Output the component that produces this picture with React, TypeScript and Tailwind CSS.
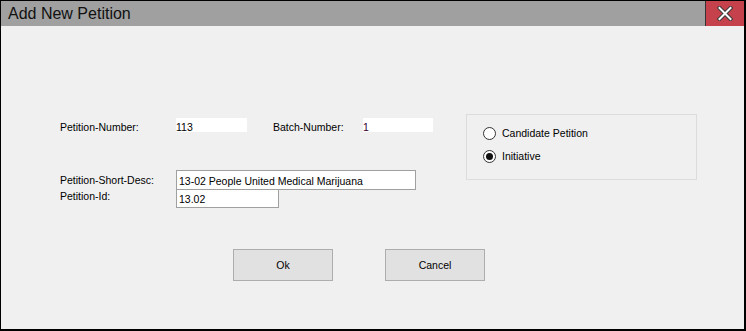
import { useState } from "react";

function CloseGlyph() {
	return (
		<svg width="16" height="15" viewBox="0 0 16 15">
			<path d="M2.5 2 L13.5 13 M13.5 2 L2.5 13" stroke="#3a3a3a" strokeWidth="4" strokeLinecap="square" />
			<path d="M2.5 2 L13.5 13 M13.5 2 L2.5 13" stroke="#ffffff" strokeWidth="2" strokeLinecap="square" />
		</svg>
	);
}

function Radio({
	label,
	checked,
	onSelect,
}: {
	label: string;
	checked: boolean;
	onSelect: () => void;
}) {
	return (
		<button
			type="button"
			className="flex items-center h-[13px] text-left"
			onClick={onSelect}
		>
			<span className="flex items-center justify-center w-[13px] h-[13px] rounded-full border border-[#333333] bg-white">
				{checked && <span className="w-[7px] h-[7px] rounded-full bg-[#111111]" />}
			</span>
			<span className="ml-[6px] leading-[13px]">{label}</span>
		</button>
	);
}

export default function App() {
	const [kind, setKind] = useState<"candidate" | "initiative">("initiative");

	return (
		<div
			className="w-[746px] h-[331px] flex flex-col border border-black border-r-2 border-b-2 bg-[#f0f0f0] text-[10.5px] text-black"
			style={{ fontFamily: '"Liberation Sans", Arial, sans-serif' }}
		>
			<div className="flex h-[25px] bg-[#a0a0a0] shrink-0">
				<div className="flex-1 pl-[7px] text-[16px] leading-[25px] text-[#111111]">
					Add New Petition
				</div>
				<button
					type="button"
					className="w-[39px] h-[25px] flex items-center justify-center bg-[#c5414b] border-l border-[#333333]"
				>
					<CloseGlyph />
				</button>
			</div>

			<div className="flex-1 flex flex-col">
				<div className="flex items-start mt-[88px] pl-[59px]">
					<div className="flex flex-col">
						<div className="flex h-[14px] mt-[4px]">
							<div className="w-[116px] pt-[2px] leading-[14px]">Petition-Number:</div>
							<div className="w-[71px] h-[14px] bg-white pt-[2px] leading-[14px]">113</div>
							<div className="ml-[26px] w-[90px] pt-[2px] leading-[14px]">Batch-Number:</div>
							<div className="w-[70px] h-[14px] bg-white pt-[2px] leading-[14px] text-[#300030]">1</div>
						</div>

						<div className="flex mt-[38px]">
							<div className="w-[116px] pt-[1.5px] leading-[16px]">
								<div>Petition-Short-Desc:</div>
								<div>Petition-Id:</div>
							</div>
							<div className="flex flex-col">
								<div className="w-[240px] h-[20px] border border-[#a0a0a0] bg-white pl-[2px] pt-[1.5px] leading-[16px]">
									13-02 People United Medical Marijuana
								</div>
								<div className="w-[103px] h-[19px] -mt-[1px] border border-[#a0a0a0] bg-white pl-[2px] pt-[1px] leading-[16px]">
									13.02
								</div>
							</div>
						</div>
					</div>

					<div className="ml-[33px] w-[231px] h-[66px] border border-[#dcdcdc] pl-[16px] pt-[12px] flex flex-col gap-[10px]">
						<Radio
							label="Candidate Petition"
							checked={kind === "candidate"}
							onSelect={() => setKind("candidate")}
						/>
						<Radio
							label="Initiative"
							checked={kind === "initiative"}
							onSelect={() => setKind("initiative")}
						/>
					</div>
				</div>

				<div className="flex mt-[41px] pl-[232px]">
					<button
						type="button"
						className="w-[100px] h-[32px] border border-[#adadad] bg-[#e1e1e1] leading-[30px]"
					>
						Ok
					</button>
					<button
						type="button"
						className="ml-[52px] w-[100px] h-[32px] border border-[#adadad] bg-[#e1e1e1] leading-[30px]"
					>
						Cancel
					</button>
				</div>
			</div>
		</div>
	);
}
